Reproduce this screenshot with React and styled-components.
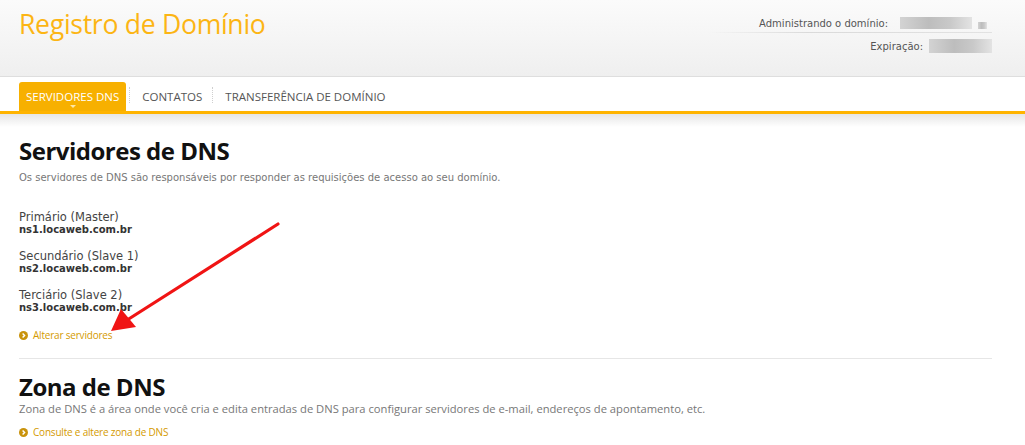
import React from 'react'
import styled, { createGlobalStyle } from 'styled-components'

const GlobalStyle = createGlobalStyle`
  html, body {
    margin: 0;
    padding: 0;
    background: #fff;
  }
  body {
    font-family: "DejaVu Sans", Verdana, sans-serif;
    color: #333;
  }
`

const servers = [
  { label: 'Primário (Master)', host: 'ns1.locaweb.com.br' },
  { label: 'Secundário (Slave 1)', host: 'ns2.locaweb.com.br' },
  { label: 'Terciário (Slave 2)', host: 'ns3.locaweb.com.br' },
]

const tabs = ['Servidores DNS', 'Contatos', 'Transferência de Domínio']

const Bullet = () => (
  <BulletIcon viewBox="0 0 10 10">
    <circle cx="5" cy="5" r="5" fill="#c9930c" />
    <path d="M4 2.8 L6.2 5 L4 7.2" stroke="#fff" strokeWidth="1.6" fill="none" />
  </BulletIcon>
)

const App = () => {
  return (
    <Page>
      <GlobalStyle />
      <Header>
        <Title>Registro de Domínio</Title>
        <Account>
          <AccountRow divided>
            <AccountLabel space={6}>Administrando o domínio:</AccountLabel>
            <Blur w={72} />
            <Blur w={9} small />
          </AccountRow>
          <AccountRow>
            <AccountLabel space={0}>Expiração:</AccountLabel>
            <Blur w={63} tall />
          </AccountRow>
        </Account>
      </Header>

      <Nav>
        {tabs.map((t, i) => (
          <React.Fragment key={t}>
            {i > 0 && <TabSep />}
            <Tab active={i === 0}>{t}</Tab>
          </React.Fragment>
        ))}
      </Nav>
      <NavShadow />

      <Content>
        <Section>
          <Heading>Servidores de DNS</Heading>
          <Description>
            Os servidores de DNS são responsáveis por responder as requisições de acesso ao seu domínio.
          </Description>
          <ServerList>
            {servers.map((s) => (
              <Server key={s.host}>
                <ServerLabel>{s.label}</ServerLabel>
                <ServerHost>{s.host}</ServerHost>
              </Server>
            ))}
          </ServerList>
          <ActionLink href="#">
            <Bullet />
            Alterar servidores
          </ActionLink>
        </Section>

        <Divider />

        <Section>
          <Heading second>Zona de DNS</Heading>
          <Description sans>
            Zona de DNS é a área onde você cria e edita entradas de DNS para configurar servidores de e-mail, endereços de apontamento, etc.
          </Description>
          <ActionLink href="#" second>
            <Bullet />
            Consulte e altere zona de DNS
          </ActionLink>
        </Section>
      </Content>

      <Arrow viewBox="0 0 1025 445">
        <line x1="278" y1="224" x2="124" y2="322" stroke="#f01414" strokeWidth="3.2" strokeLinecap="round" />
        <polygon points="111,331 121,309 136,327" fill="#f01414" />
      </Arrow>
    </Page>
  )
}

export default App

const Page = styled.div`
  position: relative;
  width: 1025px;
  height: 445px;
  overflow: hidden;
`

const Header = styled.header`
  height: 76px;
  display: flex;
  justify-content: space-between;
  align-items: flex-start;
  padding: 0 33px 0 19px;
  background: linear-gradient(#fbfbfb, #efefef);
  border-bottom: 1px solid #dedede;
`

const Title = styled.h1`
  margin: 6px 0 0;
  font-family: "Open Sans", sans-serif;
  font-weight: 400;
  font-size: 26.6px;
  letter-spacing: -0.3px;
  color: #fcb514;
`

const Account = styled.div`
  display: flex;
  flex-direction: column;
  align-items: flex-end;
  padding-top: 13px;
`

const AccountRow = styled.div`
  display: flex;
  align-items: center;
  gap: 6px;
  height: 20px;
  padding: 0 ${(p) => (p.divided ? 5 : 0)}px 0 50px;
  margin-bottom: 3px;
  background: ${(p) =>
    p.divided
      ? 'linear-gradient(90deg, rgba(220,220,220,0), #dadada 35%, #e2e2e2) left bottom / 100% 1px no-repeat'
      : 'none'};
`

const AccountLabel = styled.span`
  font-size: 10px;
  color: #555;
  margin-right: ${(p) => p.space}px;
`

const Blur = styled.span`
  display: inline-block;
  width: ${(p) => p.w}px;
  height: ${(p) => (p.tall ? 14 : p.small ? 7 : 12)}px;
  margin-top: ${(p) => (p.small ? 5 : 0)}px;
  background: linear-gradient(90deg, #d3d3d3, #bdbdbd 40%, #c9c9c9 70%, #e3e3e3);
`

const Nav = styled.nav`
  height: 34px;
  display: flex;
  align-items: flex-end;
  padding-left: 19px;
  background: #fff;
  border-bottom: 3px solid #ffb400;
`

const NavShadow = styled.div`
  height: 13px;
  background: linear-gradient(#e6e6e6, #fff);
`

const Tab = styled.a`
  position: relative;
  height: 29px;
  display: flex;
  align-items: center;
  padding: 0 ${(p) => (p.active ? '7px 1px 7px' : '7px 1px 12px')};
  box-sizing: border-box;
  font-family: "Open Sans", sans-serif;
  font-size: 11.5px;
  text-transform: uppercase;
  color: ${(p) => (p.active ? '#fff' : '#555')};
  background: ${(p) => (p.active ? '#f7b000' : 'transparent')};
  border-radius: 3px 3px 0 0;
  cursor: pointer;

  &::after {
    content: '';
    display: ${(p) => (p.active ? 'block' : 'none')};
    position: absolute;
    left: 50%;
    bottom: 3px;
    margin-left: -3px;
    border: 3px solid transparent;
    border-top-color: #fde7a8;
    border-bottom: none;
  }
`

const TabSep = styled.span`
  align-self: center;
  height: 16px;
  margin: 2px 0 0 3px;
  border-left: 1px dotted #cfcfcf;
`

const Content = styled.main`
  padding: 0 33px 0 19px;
`

const Section = styled.section`
  display: flex;
  flex-direction: column;
  align-items: flex-start;
`

const Heading = styled.h2`
  margin: ${(p) => (p.second ? '13px' : '9px')} 0 0;
  font-family: "Open Sans", sans-serif;
  font-weight: 700;
  font-size: 24px;
  line-height: 30px;
  letter-spacing: -0.5px;
  color: #111;
`

const Description = styled.p`
  margin: ${(p) => (p.sans ? '0' : '6px')} 0 0;
  font-family: ${(p) => (p.sans ? '"Open Sans", sans-serif' : 'inherit')};
  font-size: ${(p) => (p.sans ? '11.2px' : '10px')};
  line-height: ${(p) => (p.sans ? '14px' : 'normal')};
  color: #777;
`

const ServerList = styled.div`
  display: flex;
  flex-direction: column;
  gap: 14px;
  margin-top: 28px;
`

const Server = styled.div`
  display: flex;
  flex-direction: column;
`

const ServerLabel = styled.span`
  font-size: 11.5px;
  line-height: 13px;
  color: #444;
`

const ServerHost = styled.span`
  font-size: 10px;
  line-height: 12px;
  font-weight: 700;
  color: #333;
`

const ActionLink = styled.a`
  display: flex;
  align-items: center;
  gap: 5px;
  margin-top: ${(p) => (p.second ? '9px' : '14px')};
  font-family: "Open Sans", sans-serif;
  font-size: 10px;
  letter-spacing: -0.2px;
  color: #d49a00;
  text-decoration: none;
`

const BulletIcon = styled.svg`
  width: 9px;
  height: 9px;
`

const Divider = styled.hr`
  margin: 16px 0 0;
  border: none;
  border-top: 1px solid #e6e6e6;
`

const Arrow = styled.svg`
  position: absolute;
  left: 0;
  top: 0;
  width: 1025px;
  height: 445px;
  pointer-events: none;
`
